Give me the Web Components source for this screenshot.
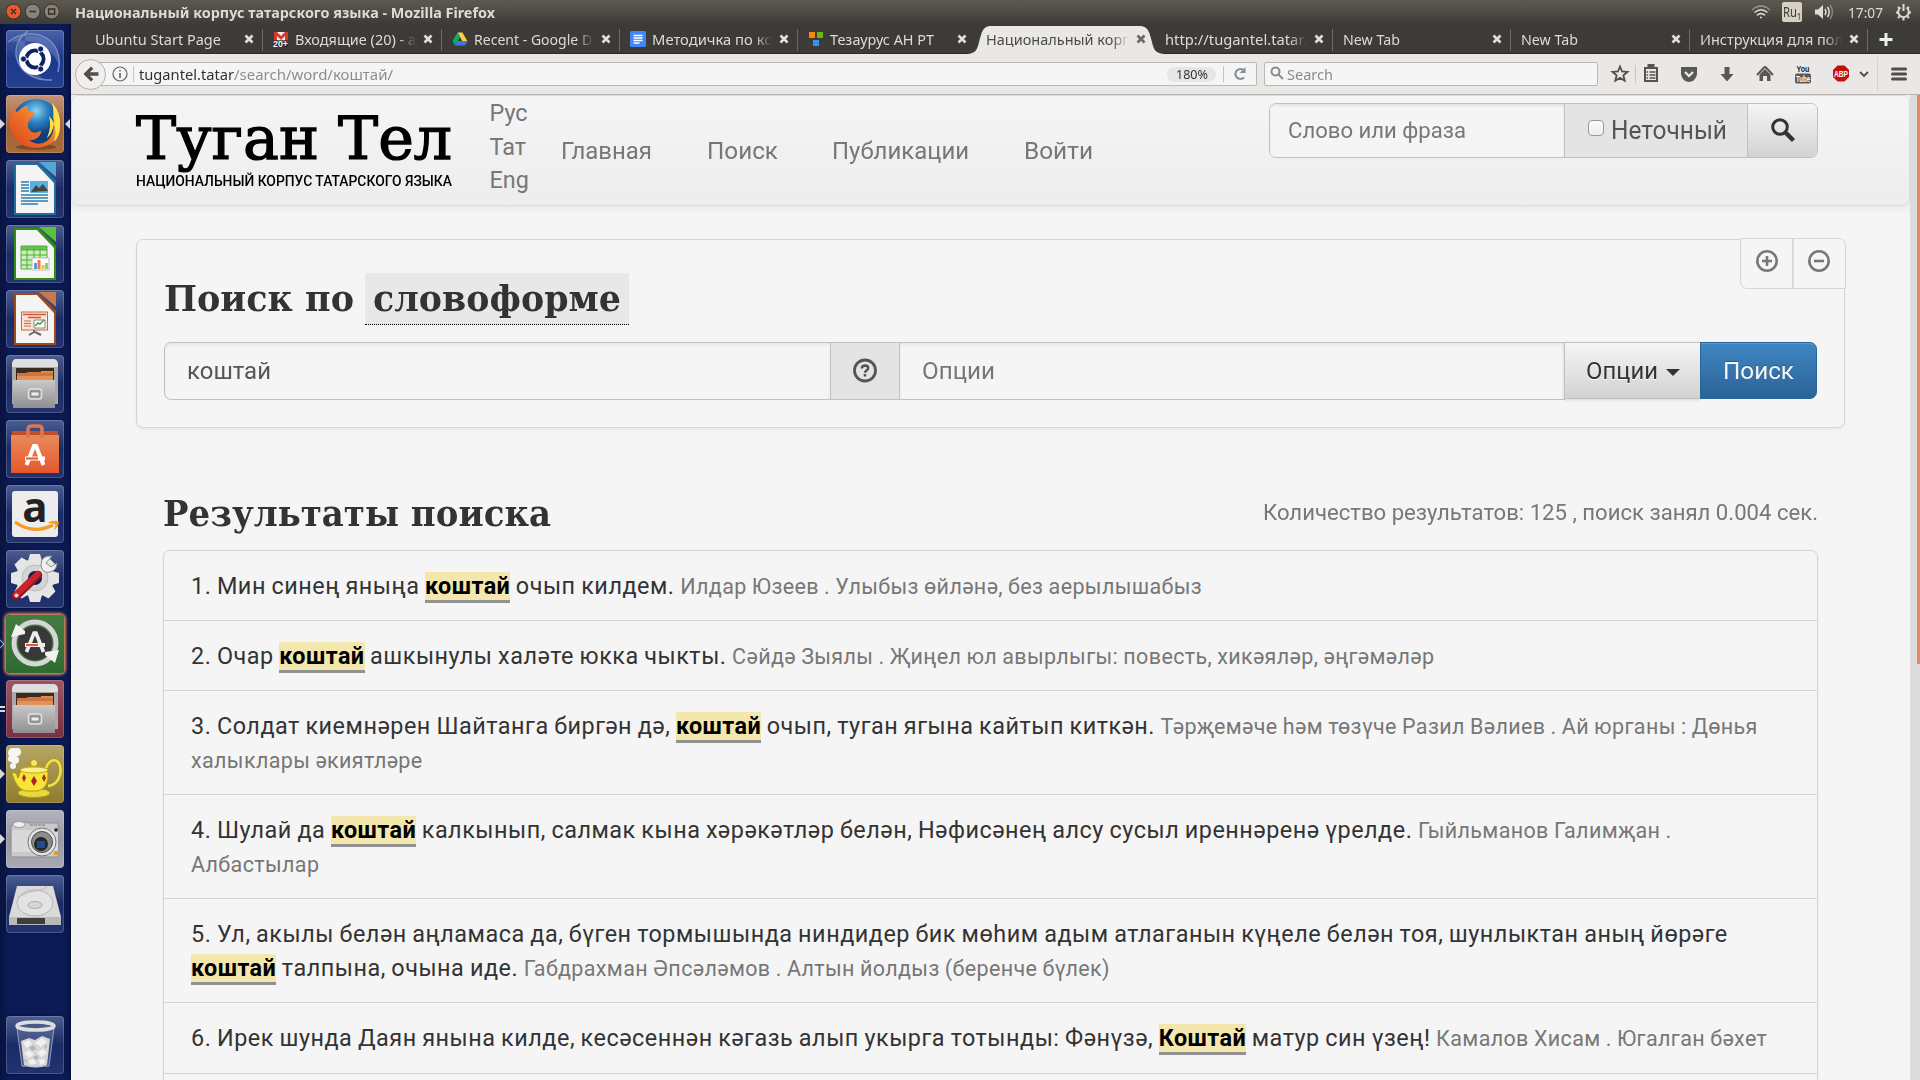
<!DOCTYPE html>
<html lang="ru">
<head>
<meta charset="utf-8">
<title>Национальный корпус татарского языка</title>
<style>
html,body{margin:0;padding:0;width:1920px;height:1080px;overflow:hidden;background:#f5f5f5}
body{font-family:Roboto,"Liberation Sans",sans-serif}
</style>
</head>
<body>
<desktop-shell></desktop-shell>
<script>
const define=(name,html,after)=>customElements.define(name,class extends HTMLElement{
  constructor(){super();this.attachShadow({mode:'open'});}
  connectedCallback(){
    if(this.done)return;this.done=true;
    this.shadowRoot.innerHTML=typeof html==='function'?html(this):html;
    if(after)after(this);
  }
});

/* Text condensed or widened to a given width */
define('fit-text','<style>:host{display:inline-block;white-space:nowrap;overflow:visible}span{display:inline-block;transform-origin:0 50%}</style><span><slot></slot></span>',el=>{
  const w=+el.getAttribute('w'),s=el.shadowRoot.querySelector('span');
  const m=s.getBoundingClientRect().width;
  el.style.width=w+'px';
  if(m)s.style.transform='scaleX('+(w/m)+')';
});

/* ---------- launcher ---------- */
const doc=(c,l,inner)=>`<path d="M8 3h23l19 19v33H8z" fill="${c}"/><path d="M10 5h21l17 18v30H10z" fill="#f4f4f4"/><path d="M33 2h17v15z" fill="${l}"/><path d="M31 3l19 19" stroke="${c}" stroke-width="2.4"/>${inner}`;
const files=`<path d="M6 8q1-4 4-4h37q4 0 5 4v41H6z" fill="#a9a9a9"/><path d="M6 9q1-5 4-5h37q4 0 5 5v3H6z" fill="#dedede"/><path d="M10 13h38v12H10z" fill="#3a2a20"/><path d="M11 18h9l2-1h25v8H11z" fill="#cf7444"/><path d="M11 21h36v5H11z" fill="#e39256"/><path d="M35 16h12v2H35z" fill="#d8923c"/><path d="M7 25h42v28H7z" fill="url(#gr)"/><rect x="22.500" y="34" width="13" height="10" rx="2.500" fill="#9b9b9b" stroke="#e2e2e2" stroke-width="1.500"/><rect x="25" y="37" width="8" height="4" fill="#eee" stroke="#777" stroke-width=".7"/>`;
const icons={
ubuntu:`<path d="M22 1C-2 18 12 52 46 50M2 12C26-6 60 8 52 42" stroke="#93a5d8" stroke-width="1.500" opacity=".7" fill="none"/><path d="M20 3C2 22 12 50 42 50Q14 42 20 3M4 12C28-2 54 8 54 36Q38 4 4 12" fill="#8fa2d4" opacity=".35"/><circle cx="29" cy="29" r="16" fill="#fff"/><circle cx="29" cy="29" r="8.500" fill="none" stroke="#0d2263" stroke-width="4"/><g stroke="#fff" stroke-width="1.500"><path d="M29 29h-14M29 29l7-12M29 29l7 12"/></g><circle cx="29" cy="29" r="6.500" fill="#fff"/><g fill="#0d2263" stroke="#fff" stroke-width=".8"><circle cx="17.500" cy="29" r="3"/><circle cx="34.700" cy="19" r="3"/><circle cx="34.700" cy="39" r="3"/></g>`,
firefox:`<ellipse cx="30" cy="52" rx="20" ry="3" fill="#5a3018" opacity=".5"/><circle cx="30" cy="28" r="24" fill="url(#gb)"/><path d="M46 8q9 9 8 23-2 21-25 22Q7 51 4 31 3 21 8 13q1 3 3 4 5-5 11-7-1 4 1 7 5-1 6 2-4 2-5 6-4 4-1 9 3 5 9 3 5-3 2 3-4 6-11 5 9 7 18 1 9-7 6-24 1-8-1-14z" fill="url(#go)"/><path d="M46 8q9 10 8 23 0 10-6 16 3-12 0-18-2 10-7 14 5-12 2-22 4 4 5 8 1-11-2-21z" fill="#ffe24a"/>`,
writer:doc('#1d6e9b','#4fa8d8',`<g stroke="#2f7dac" stroke-width="1.500"><path d="M15 22h8M15 25h8M15 28h8M15 31h8M15 35h27M15 38h27M15 41h27M15 44h17"/></g><rect x="24" y="21" width="18" height="12" fill="#5bb0e2"/><path d="M25 32l5-7 3 3 4-4 5 7z" fill="#47453a"/>`),
calc:doc('#2f8f12','#5cc23a',`<path d="M15 21h26v23H15z" fill="#c9efbc"/><path d="M15 21h26v4H15z" fill="#6cc24e"/><path d="M15 21h26v23H15zM15 25h26M15 30h26M15 35h26M15 40h26M21 21v23M28 21v23M34 21v23" stroke="#55ab3c" fill="none"/><path d="M26 33h17v12H26z" fill="#fff" stroke="#bbb"/><path d="M28 38h3v6h-3z" fill="#5b9bd5"/><path d="M31.500 35h3v9h-3z" fill="#ef7d4f"/><path d="M35.500 40h3v4h-3z" fill="#f2c32d"/><path d="M39 38h3v6h-3z" fill="#8bd06d"/>`),
impress:doc('#a04a1b','#c77a4e',`<rect x="15.500" y="22" width="26" height="18" fill="#fbe3d5" stroke="#c56b43"/><path d="M17 24.500h23M22 27.500h13" stroke="#d0573a" stroke-width="1.500"/><path d="M18 31h7M18 33.500h7M18 36h7" stroke="#c56b43"/><path d="M28 30h11v8H28z" fill="#fff" stroke="#888"/><path d="M29 36l3-3 2 1 4-4" stroke="#49a33b" stroke-width="1.500" fill="none"/><path d="M28 40v2l-5 3M29 42l6 3" stroke="#666" stroke-width="2" fill="none"/>`),
files,
software:`<path d="M6 11h46v6H6z" fill="#c0502c"/><path d="M5 15h48v38H5z" fill="url(#gor)"/><path d="M22 18v-9q0-3 4-3h6q4 0 4 3v9" fill="none" stroke="#e2744f" stroke-width="3.500"/><path d="M20.500 45l7.500-19h2l7.500 19" fill="none" stroke="#fff" stroke-width="4"/><path d="M19 38.500h20" stroke="#fff" stroke-width="4"/><path d="M20 38.500h12" stroke="#e05a2b" stroke-width="2"/>`,
amazon:`<rect x="6" y="6" width="46" height="46" rx="3" fill="#ededed"/><text x="29" y="37" text-anchor="middle" font-family="Open Sans" font-weight="700" font-size="42" fill="#222">a</text><path d="M9 37q18 13 38 3" fill="none" stroke="#f79a1e" stroke-width="3.200"/><path d="M41 38q8-4 12-1-1 6-5 8 2-4 1-6-3-1-8-1z" fill="#f79a1e"/>`,
settings:`<g fill="#e5e5e5"><circle cx="29" cy="28" r="19"/><path d="M24 4h10l2 7H22zM24 52h10l2-7H22zM5 23v10l7 2V21zM53 23v10l-7 2V21z"/><g transform="rotate(45 29 28)"><path d="M24 4h10l2 7H22zM24 52h10l2-7H22zM5 23v10l7 2V21zM53 23v10l-7 2V21z"/></g></g><circle cx="29" cy="28" r="13" fill="#d4d4d4" stroke="#bbb"/><circle cx="29" cy="28" r="7" fill="#0c215f"/><path d="M31 26l9-9" stroke="#e3e3e3" stroke-width="7"/><path d="M46 6q-11-1-11 9 1 9 9 7 7-2 7-9l-6 4-5-4z" fill="#f0f0f0" stroke="#8a8a8a"/><path d="M10 46L32 25" stroke="#8d1219" stroke-width="8.500" stroke-linecap="round"/><path d="M10 45L32 24" stroke="#c8242c" stroke-width="6" stroke-linecap="round"/><circle cx="10.500" cy="45.500" r="2" fill="#ddd"/>`,
updater:`<circle cx="29" cy="28" r="17" fill="#383838"/><circle cx="29" cy="28" r="21" fill="none" stroke="#d6d6d6" stroke-width="5"/><path d="M5 22L10 9l9 7 0 3z" fill="#f2f2f2"/><path d="M53 35L49 48l-10-8 0-3z" fill="#f2f2f2"/><path d="M20.500 37l7.500-19h2l7.500 19" fill="none" stroke="#eee" stroke-width="3.600"/><path d="M19 30h20" stroke="#eee" stroke-width="4"/><path d="M20 30h12" stroke="#e05a2b" stroke-width="2"/>`,
lamp:`<ellipse cx="28" cy="48" rx="16" ry="4.500" fill="#e9d93f" stroke="#b39b12"/><path d="M40 23q4-10 11-7 5 4 3 14-3 10-12 11" fill="none" stroke="#b39b12" stroke-width="4"/><path d="M40 23q4-10 11-7 5 4 3 14-3 10-12 11" fill="none" stroke="#f1e05a" stroke-width="2.500"/><path d="M6 28q4-2 6 5l2-5q2-6 13-7 13 1 15 7 1 15-10 18H20Q10 44 6 28z" fill="#f6e536" stroke="#b39b12"/><ellipse cx="28" cy="25" rx="14" ry="3" fill="#faf08a" stroke="#c5ad20"/><circle cx="28" cy="18" r="3.500" fill="#f6e96a" stroke="#b39b12"/><path d="M28 31l3 5-3 5-3-5zM18 29l2 4-2 4-2-4zM38 29l2 4-2 4-2-4z" fill="#b3202a"/><g fill="#f7f7f7"><circle cx="7" cy="8" r="5"/><circle cx="11" cy="7" r="4"/><circle cx="5" cy="14" r="3"/><circle cx="9" cy="15" r="4"/><circle cx="7" cy="21" r="3"/></g>`,
camera:`<path d="M5 15h7q1-3 8-3l2 1h30v34H5z" fill="#c9c9c9" stroke="#8f8f8f"/><path d="M6 20h46v22H6z" fill="#d9d9d9"/><ellipse cx="13" cy="14.500" rx="6" ry="3" fill="#eee" stroke="#999"/><path d="M24 15h16" stroke="#777" stroke-dasharray="3 1"/><circle cx="36" cy="32" r="14" fill="#e4e4e4" stroke="#777"/><circle cx="36" cy="32" r="10.500" fill="#8d8d8d" stroke="#4a4a4a"/><circle cx="35" cy="34" r="7" fill="#262626"/><path d="M31 31h8v7h-8z" fill="#1b4c94"/><circle cx="50" cy="20" r="1.800" fill="#222"/><path d="M48 41h4v4h-4z" fill="#e99b30"/>`,
disk:`<path d="M11 11h36l8 31H3z" fill="#dadada"/><path d="M3 42h52v8H3z" fill="#b9b9b9"/><path d="M11 43l28 0v6H11z" fill="#3e3e3e"/><ellipse cx="29" cy="28" rx="18" ry="13" fill="#e3e3e3" stroke="#b4b4b4"/><ellipse cx="29" cy="30" rx="7" ry="3.500" fill="#d6d6d6" stroke="#aaa"/><path d="M12 22q10-6 22-7l7-3" fill="none" stroke="#bbb"/>`,
trash:`<path d="M11 11l5 40h27l5-40z" fill="#8f9dc2" opacity=".3"/><path d="M15 25l8-3 6 2 7-4 8 3-3 26q-11 5-23 0z" fill="#d6d6d6"/><g fill="#f1f1f1"><path d="M17 27l6-3 3 4-5 4zM29 27l7-5 5 4-6 5zM18 37l5-3 5 4-5 4zM31 36l6-3 4 4-6 4zM22 45l5-2 4 4-6 2zM33 44l5-1 1 4-5 2z"/></g><g fill="#b4b4b4"><path d="M23 31l5-2 2 4-4 2zM27 41l4-2 2 3-3 2zM38 30l3-1-1 4zM18 43l3 1-1 3z"/></g><path d="M11 12l5 38h27l5-38" stroke="#b9c2da" fill="none" opacity=".7"/><ellipse cx="29.500" cy="10" rx="18.500" ry="4" fill="#4c5a85" stroke="#dedede" stroke-width="3.500"/>`
};
define('launcher-tile',el=>`<style>:host{display:block;width:58px;height:58px;box-sizing:border-box;border-radius:4px;flex:none;position:relative;
background:var(--tile,linear-gradient(#4c5d90,#1b2b66 50%,#223370));box-shadow:inset 0 0 0 1px rgba(255,255,255,.18),0 0 3px rgba(0,0,0,.45)}
svg{display:block;overflow:visible}i{position:absolute;top:24px;border:5px solid transparent}
.l{left:-6px;border-left-color:#d8d8d8;border-right:0}.r{left:59px;border-right-color:#d8d8d8;border-left:0}
.o{left:-11px;top:25px;width:6px;height:6px;border:1.500px solid #7fb4e8;transform:rotate(45deg)}
.d{left:-6px;top:26px;width:5px;height:2px;border:0;border-top:2px solid #d8d8d8;border-bottom:2px solid #d8d8d8}</style>
<svg width="58" height="58" viewBox="0 0 58 58"><defs><linearGradient id="gr" x2="0" y2="1"><stop stop-color="#c9c9c9"/><stop offset="1" stop-color="#8f8f8f"/></linearGradient><radialGradient id="gb" cy=".25"><stop stop-color="#8fd3f2"/><stop offset=".5" stop-color="#2a7fc0"/><stop offset="1" stop-color="#123e78"/></radialGradient><linearGradient id="go" x1="0" y1="1" x2="1" y2="0"><stop stop-color="#d6431c"/><stop offset=".5" stop-color="#f0742a"/><stop offset="1" stop-color="#ffd23e"/></linearGradient><linearGradient id="gor" x2="0" y2="1"><stop stop-color="#e98a5c"/><stop offset="1" stop-color="#e5572a"/></linearGradient></defs>${icons[el.getAttribute('icon')]}</svg>${(el.getAttribute('mark')||'').split('').map(m=>`<i class="${m}"></i>`).join('')}`);

define('app-launcher',`<style>:host{display:flex;flex-direction:column;justify-content:space-between;width:71px;box-sizing:border-box;padding:6px 0 6px 6px;background:linear-gradient(90deg,#08133f,#0b1a55 12%,#0b1b57 92%,#07123c)}
div{display:flex;flex-direction:column;gap:7px}</style>
<div>
<launcher-tile icon="ubuntu" style="--tile:linear-gradient(#4a62a8,#1b3a8c 50%,#24418f)"></launcher-tile>
<launcher-tile icon="firefox" mark="lr" style="--tile:linear-gradient(#c59478,#a0653c 55%,#a96a3a)"></launcher-tile>
<launcher-tile icon="writer"></launcher-tile>
<launcher-tile icon="calc"></launcher-tile>
<launcher-tile icon="impress"></launcher-tile>
<launcher-tile icon="files"></launcher-tile>
<launcher-tile icon="software"></launcher-tile>
<launcher-tile icon="amazon"></launcher-tile>
<launcher-tile icon="settings"></launcher-tile>
<launcher-tile icon="updater" mark="o" style="--tile:linear-gradient(#437c43,#2f6b2f);box-shadow:0 0 3px 2px #d98a55"></launcher-tile>
<launcher-tile icon="files" mark="d" style="--tile:linear-gradient(#9a5665,#7b2e40)"></launcher-tile>
<launcher-tile icon="lamp" mark="l" style="--tile:linear-gradient(#b5a664,#8e7d2e)"></launcher-tile>
<launcher-tile icon="camera" mark="l" style="--tile:linear-gradient(#b3b3bd,#9a9aa6 50%,#a9a9b4)"></launcher-tile>
<launcher-tile icon="disk"></launcher-tile>
</div>
<launcher-tile icon="trash"></launcher-tile>`);

/* ---------- system panel ---------- */
define('top-panel',`<style>:host{display:flex;align-items:center;height:24px;box-sizing:border-box;padding:0 8px 0 6px;background:linear-gradient(#5c5850,#56534a 25%,#3d3b36);color:#dfdbd2;font:15px/22px "Noto Sans",sans-serif}
b{margin-left:16px;flex:1;padding-bottom:1px}svg{display:block}.s{display:flex;align-items:center}
.ru{width:20px;height:20px;margin-left:11px;margin-bottom:1px;background:#d6d0c6;color:#3d3b36;border-radius:2px;display:flex;justify-content:center;font-size:14px;line-height:20px}
.ru sub{font-size:8px;line-height:29px;vertical-align:baseline}</style>
<svg width="53" height="24"><g stroke="#33312c"><circle cx="7.500" cy="11.500" r="7.500" fill="#e9592d"/><circle cx="26.700" cy="11.500" r="7.500" fill="#86837a"/><circle cx="45.700" cy="11.500" r="7.500" fill="#86837a"/></g><g stroke="#3b2a22" stroke-width="1.300" fill="none"><path d="M5 9l5 5M10 9l-5 5M23.500 11.500h6.500M42.700 9h6v5h-6z"/></g></svg>
<b><fit-text w="420">Национальный корпус татарского языка - Mozilla Firefox</fit-text></b>
<div class="s">
<svg width="20" height="24" fill="none" stroke="#dfdbd2" stroke-width="1.500"><path d="M1 10Q10 2 19 10" opacity=".5"/><path d="M3.500 12.500Q10 7 16.500 12.500M6 15.300Q10 12 14 15.300"/><circle cx="10" cy="17.500" r="1" fill="#dfdbd2" stroke="none"/></svg>
<span class="ru"><fit-text w="14">Ru</fit-text><sub>1</sub></span>
<svg width="22" height="24" style="margin-left:12px" fill="none" stroke="#dfdbd2" stroke-width="1.500"><path d="M1 9.500h3l5-4.500v14l-5-4.500h-3z" fill="#dfdbd2" stroke="none"/><path d="M11 9q2 3 0 6M13.500 7q3.500 5 0 10"/><path d="M16 5q5 7 0 14" opacity=".4"/></svg>
<fit-text w="35" style="margin:0 0 1px 12px">17:07</fit-text>
<svg width="17" height="24" style="margin-left:12px" fill="none" stroke="#dfdbd2" stroke-width="2"><path d="M5.500 7.500a5.300 5.300 0 1 0 6 0M8.500 4v7"/><path d="M1 12.500h2M14 12.500h2M3 7l1.500 1.500M14 7l-1.500 1.500M3 18l1.500-1.500M14 18l-1.500-1.500M8.500 18v2.500"/></svg>
</div>`);

/* ---------- browser tabs ---------- */
const fav={
gmail:`<path d="M1 1h14v10H1z" fill="#eee"/><path d="M1 1h3l4 4 4-4h3v9h-3V5L8 9 4 5v5H1z" fill="#d8382c"/><path d="M1 9h14v7H1z" fill="#222" opacity=".7"/><text x="0" y="15.500" font-family="Liberation Sans" font-size="9" font-weight="bold" fill="#f4f4f4" textLength="15" lengthAdjust="spacingAndGlyphs">20+</text>`,
drive:`<path d="M5.500 1.500h5l5 9h-5z" fill="#ffcf48"/><path d="M5.500 1.500L8 6l-5 8.500L.5 10z" fill="#11a861"/><path d="M5.500 10h10L13 14.500H3z" fill="#3b78e7"/>`,
docs:`<rect width="16" height="16" rx="1.500" fill="#4285f4"/><path d="M3.500 4.500h9M3.500 7h9M3.500 9.500h9M3.500 12h6" stroke="#fff" stroke-width="1.300"/>`,
thes:`<path d="M1 1h6v6H1z" fill="#f78a0b"/><path d="M9 1h6v6H9z" fill="#6cbb0b"/><path d="M5 9h6v6H5z" fill="#3b8eea"/>`};
define('browser-tab',el=>{const a=el.hasAttribute('active'),f=el.getAttribute('fav'),w=el.getAttribute('w');
return `<style>:host{display:flex;align-items:center;position:relative;box-sizing:border-box;width:178.300px;height:30px;flex:none;padding:1px 9px 1px 10px;color:${a?'#4c4b48':'#dfdbd2'};font:15px/28px "Noto Sans",sans-serif}
:host(:not([nosep]))::after{content:"";position:absolute;right:0;top:5px;width:1px;height:22px;background:#6d6b66}
.t{flex:1;min-width:0;overflow:hidden;white-space:nowrap;position:relative;height:28px}
.fade{-webkit-mask-image:linear-gradient(90deg,#000 calc(100% - 17px),transparent)}
svg{flex:none;display:block;overflow:visible}.f{margin-right:6px}.x{margin-left:7px}
.bg{position:absolute;left:-11px;top:1px}.t,.x,.f{z-index:1}</style>
${a?`<svg class="bg" width="202" height="29"><path d="M0 29C14 29 12 22 16 10C18 3 21 1 26 1H174C180 1 183 3 185 10C189 22 187 29 202 29z" fill="#eae8e6"/></svg>`:''}
${f?`<svg class="f" width="16" height="16">${fav[f]}</svg>`:''}<div class="t ${el.hasAttribute('fade')?'fade':''}"><fit-text w="${w}"><slot></slot></fit-text></div>
<svg class="x" width="10" height="10" stroke="${a?'#6a6862':'#e3dfd7'}" stroke-width="2.600"><path d="M1.500 1.500l7 7M8.500 1.500l-7 7"/></svg>`});
define('tab-strip',`<style>:host{display:flex;height:30px;background:#3c3b37;padding-left:14px;box-shadow:inset 0 -1px #2c2b28}svg{margin:6px 0 0 8.500px}</style>
<browser-tab w="126">Ubuntu Start Page</browser-tab>
<browser-tab fav="gmail" w="121" fade>Входящие (20) - а</browser-tab>
<browser-tab fav="drive" w="124" fade>Recent - Google Dr</browser-tab>
<browser-tab fav="docs" w="121" fade>Методичка по ко</browser-tab>
<browser-tab fav="thes" w="104" nosep>Тезаурус АН РТ</browser-tab>
<browser-tab active w="145" fade nosep>Национальный корп</browser-tab>
<browser-tab w="145" fade>http://tugantel.tatar/</browser-tab>
<browser-tab w="57">New Tab</browser-tab>
<browser-tab w="57">New Tab</browser-tab>
<browser-tab w="143" fade>Инструкция для пол</browser-tab>
<svg width="20" height="20" stroke="#eee" stroke-width="3"><path d="M10 3v13M3.500 9.500h13"/></svg>`);

/* ---------- navigation toolbar ---------- */
define('nav-toolbar',`<style>:host{display:flex;align-items:center;box-sizing:border-box;height:41px;background:#eae8e6;border-bottom:1px solid #b9b6b2;padding-left:4px;font:15px/22px "Noto Sans",sans-serif;color:#33322f}
.back{width:31px;height:31px;border:1px solid #b3b0ab;border-radius:50%;background:#f0efed;box-sizing:border-box;flex:none;z-index:1}
.url,.q{display:flex;align-items:center;box-sizing:border-box;height:24px;border:1px solid #bbb8b4;border-radius:2px;background:#f5f5f5}
.url{width:1167px;margin-left:-16px;padding-left:21px}.q{width:334px;margin-left:7px;padding-left:4px;color:#8c8b88}
svg{display:block;flex:none;overflow:visible}.path{color:#8e8d8a}.sep{width:1px;background:#c9c6c2}
.pill{width:49px;height:15px;border-radius:8px;background:#e6e6e6;display:flex;align-items:center;justify-content:center;font-size:13px;line-height:15px}
.ic{display:grid;grid-template-columns:repeat(6,38px);}.ic svg{width:22px;margin:auto}</style>
<svg class="back" viewBox="0 0 31 31"><path d="M8 15l8-8 2.500 2.500-3.800 3.700H24v3.600h-9.300l3.800 3.700L16 23z" fill="#4f4e4b"/></svg>
<div class="url"><svg width="16" height="16" fill="none" stroke="#63625f" stroke-width="1.200"><circle cx="8" cy="8" r="7"/><path d="M8 7v5M8 4v1.500" stroke-width="1.600"/></svg>
<i class="sep" style="height:16px;margin:0 5px 0 5px"></i><fit-text w="95">tugantel.tatar</fit-text><fit-text class="path" w="159">/search/word/коштай/</fit-text><span style="flex:1"></span>
<span class="pill"><fit-text w="32">180%</fit-text></span><i class="sep" style="height:16px;margin:0 8px 0 7px"></i>
<svg width="16" height="16" style="margin-right:8px" fill="none" stroke="#8291a0" stroke-width="2.200"><path d="M12 11.500A5 5 0 1 1 12 4.500"/><path d="M13.500 1v6h-6z" fill="#8291a0" stroke="none"/></svg></div>
<div class="q"><svg width="18" height="18" fill="none" stroke="#8c8b88" stroke-width="2"><circle cx="6.500" cy="6.500" r="4"/><path d="M9.500 9.500l4.500 4.500"/></svg><fit-text w="46">Search</fit-text></div>
<svg width="20" height="20" style="margin:0 5px 0 12px" fill="none" stroke="#4f4e4b" stroke-width="1.800"><path d="M10 2.500l2.100 5 5.400.4-4.100 3.500 1.300 5.300L10 13.900l-4.700 2.800 1.300-5.300-4.100-3.500 5.400-.4z"/></svg><i class="sep" style="height:18px"></i>
<div class="ic" style="margin-left:-4px">
<svg height="20" viewBox="-1 0 22 20" fill="none" stroke="#55534f" stroke-width="2"><path d="M4 4h12v13H4z"/><path d="M7.500 3.500h5V1h-5z" fill="#55534f"/><path d="M5.500 8h1.500M8.500 8h6M5.500 11h1.500M8.500 11h6M5.500 14h1.500M8.500 14h6" stroke-width="1.600"/></svg>
<svg height="20" viewBox="0 0 22 20"><path d="M3 3h16v7q-1 7-8 8-7-1-8-8z" fill="#5a5855"/><path d="M7 8l4 4 4-4" fill="none" stroke="#eee" stroke-width="2.200"/></svg>
<svg height="20" viewBox="0 0 22 20"><path d="M8.500 3h5v7h4l-6.500 7.500L4.500 10h4z" fill="#5a5855"/></svg>
<svg height="20" viewBox="0 0 22 20"><path d="M11 2.500L19 11M11 2.500L3 11" stroke="#5a5855" stroke-width="2" fill="none"/><path d="M5.500 10.500L11 5l5.500 5.500V17H13v-5H9v5H5.500z" fill="#5a5855"/></svg>
<svg height="20" viewBox="0 0 22 20"><text x="11" y="8.300" text-anchor="middle" font-family="Liberation Sans" font-size="9" font-weight="bold" fill="#222" textLength="13" lengthAdjust="spacingAndGlyphs">You</text><rect x="3" y="9.500" width="16" height="10" rx="2" fill="#5a5855"/><text x="11" y="17.500" text-anchor="middle" font-family="Liberation Sans" font-size="8.500" font-weight="bold" fill="#fff" textLength="14" lengthAdjust="spacingAndGlyphs">Tube</text></svg>
<svg height="20" viewBox="0 0 22 20"><path d="M7.500 1.500h7l4.500 4.500v7l-4.500 4.500h-7L3 13V6z" fill="#c70d0d"/><text x="11" y="12.800" text-anchor="middle" font-family="Liberation Sans" font-size="9" font-weight="bold" fill="#fff" textLength="14" lengthAdjust="spacingAndGlyphs">ABP</text></svg>
</div>
<svg width="12" height="12" style="margin-left:-2px" fill="none" stroke="#4f4e4b" stroke-width="1.800"><path d="M2 4l4 4 4-4"/></svg>
<i class="sep" style="height:34px;margin-left:7px;background:#d8d5d1"></i>
<svg width="18" height="16" style="margin-left:12px" stroke="#4f4e4b" stroke-width="3" stroke-linecap="round"><path d="M2.500 3h13M2.500 8h13M2.500 13h13"/></svg>`);

/* ---------- site ---------- */
define('site-header',`<style>:host{display:flex;box-sizing:border-box;height:111px;width:1839px;padding:0 91px 0 64px;border:1px solid #dcdcdc;border-radius:7px;background:linear-gradient(#f5f5f5,#ededed);box-shadow:0 2px 8px rgba(0,0,0,.07);color:#777;font:23.400px/33.400px Roboto,sans-serif}
.logo{width:316px;display:flex;flex-direction:column;color:#000}
.a{font:60px/72px "DejaVu Serif Condensed","DejaVu Serif",serif;font-stretch:condensed;height:72px;margin-top:6px;-webkit-text-stroke:1.200px #000}
.b{font:500 15px/18px Roboto,sans-serif;height:18px;margin-top:-2px}
.lang{display:flex;flex-direction:column;margin:1px 0 0 37.500px;width:44px;flex:none;line-height:33.600px}
nav{display:flex;gap:54.500px;margin:39px auto 0 27.500px}
.s{display:flex;height:55px;margin-top:7px;border:1px solid #c1c1c1;border-radius:7px;box-sizing:border-box;font-size:21.500px;line-height:53px;overflow:hidden}
.in{width:276.500px;padding-left:18px;background:#f5f5f5;box-shadow:inset 0 2px 3px rgba(0,0,0,.08)}
.ad{width:184px;box-sizing:border-box;border:solid #c1c1c1;border-width:0 1px;background:#e4e4e4;color:#555;display:flex;padding-left:22.500px;font-size:25px}
.cb{width:16px;height:16px;box-sizing:border-box;border:1px solid #999;border-radius:4px;background:linear-gradient(#fafafa,#eee);margin:16px 7px 0 0}
.bt{width:69px;background:linear-gradient(#f5f5f5,#d2d2d2);display:flex;align-items:center;justify-content:center}</style>
<div class="logo"><div class="a"><fit-text w="316">Туган Тел</fit-text></div><div class="b"><fit-text w="316">НАЦИОНАЛЬНЫЙ КОРПУС ТАТАРСКОГО ЯЗЫКА</fit-text></div></div>
<div class="lang"><span>Рус</span><span>Тат</span><span>Eng</span></div>
<nav><fit-text w="91">Главная</fit-text><fit-text w="71">Поиск</fit-text><fit-text w="137">Публикации</fit-text><fit-text w="69">Войти</fit-text></nav>
<div class="s"><div class="in"><fit-text w="178">Слово или фраза</fit-text></div><div class="ad"><span class="cb"></span><fit-text w="116">Неточный</fit-text></div>
<div class="bt"><svg width="26" height="26" fill="none" stroke="#333"><circle cx="10" cy="9" r="7.300" stroke-width="3"/><path d="M15.500 14.500l8 8" stroke-width="4.500"/></svg></div></div>`);

define('query-card',`<style>:host{display:block;position:relative;box-sizing:border-box;width:1709px;height:189px;margin:33px 0 0 65px;border:1px solid #d4d4d4;border-radius:7px;box-shadow:0 2px 3px rgba(0,0,0,.05);padding:33px 27px 0;color:#333}
h2{margin:0;height:52px;display:flex;font:bold 35.500px/52px "DejaVu Serif Condensed","DejaVu Serif",serif;font-stretch:condensed}
.w{margin-left:11px;padding:0 8px;background:#e8e8e6;border-bottom:1px dotted #000;height:51px}
.row{display:flex;margin-top:17px;height:58px;font:23.400px/56px Roboto,sans-serif}
.row>*{box-sizing:border-box;border:1px solid #c1c1c1}
.in{width:667px;padding-left:22px;box-shadow:inset 0 2px 3px rgba(0,0,0,.06);color:#555}
.f{border-radius:7px 0 0 7px}.ph{color:#777;width:667px;padding-left:22px}
.ad{width:70px;margin:0 -1px;background:#e4e4e4;display:flex;align-items:center;justify-content:center}
.op{width:137px;margin-left:-1px;height:57px;padding-left:21px;background:linear-gradient(#f5f5f5,#d2d2d2);box-shadow:0 1px 3px rgba(0,0,0,.12);display:flex;text-shadow:0 1px #fff}
.op i{margin:26px 0 0 8px;border:7px solid transparent;border-top-color:#333;border-bottom:0;height:0}
.go{width:117px;height:57px;margin-left:-1px;padding-left:22px;border-color:#2a6598;background:linear-gradient(#4086c3,#2a6397);box-shadow:inset 0 1px rgba(255,255,255,.15);border-radius:0 7px 7px 0;color:#f5f5f5;text-shadow:0 -1px rgba(0,0,0,.25)}
.pm{position:absolute;right:-2px;top:-2px;width:106px;height:51px;box-sizing:border-box;display:flex;border:1px solid #d5d5dc;border-radius:0 7px 0 7px;background:#f5f5f5}
.pm span{flex:1;display:flex;justify-content:center;padding-top:10px}.pm span+span{border-left:2px solid #d9d9df;padding-right:1px}svg{display:block}</style>
<h2><fit-text w="190">Поиск по</fit-text><span class="w"><fit-text w="248">словоформе</fit-text></span></h2>
<div class="row"><div class="in f"><fit-text w="84">коштай</fit-text></div>
<div class="ad"><svg width="26" height="26" fill="none" stroke="#555"><circle cx="13" cy="12.500" r="10.500" stroke-width="2.800"/><path d="M9.800 10.500q.2-3 3.400-3 3 .2 3 2.600 0 1.500-1.800 2.500-1.400.8-1.400 2.200" stroke-width="2.500"/><path d="M13 16v2.500" stroke-width="2.600"/></svg></div>
<div class="in ph"><fit-text w="73">Опции</fit-text></div><div class="op"><fit-text w="72">Опции</fit-text><i></i></div><div class="go"><fit-text w="71">Поиск</fit-text></div></div>
<div class="pm"><span style="padding-left:1px"><svg width="24" height="24" fill="none" stroke="#777" stroke-width="2.600"><circle cx="12" cy="12" r="9.700"/><path d="M12 7v10M7 12h10"/></svg></span><span><svg width="24" height="24" fill="none" stroke="#777" stroke-width="2.600"><circle cx="12" cy="12" r="9.700"/><path d="M7 12h10"/></svg></span></div>`);

define('hit-word','<style>:host{display:inline;background:#f3e7ae;border-bottom:3px solid #929292;color:#000;font-weight:bold;line-height:0;letter-spacing:.42px}</style><slot></slot>');
define('source-note','<style>:host{display:inline;color:#777;font-size:21.500px;line-height:0;letter-spacing:.36px;word-spacing:-.5px}</style><slot></slot>');
define('result-row','<style>:host{display:block;box-sizing:border-box;padding:18px 27px 17.100px;border-bottom:1px solid #d4d4d4;line-height:34px;white-space:nowrap;letter-spacing:.52px;word-spacing:-.75px}</style><slot></slot>');
define('result-list',`<style>:host{display:block;padding:0 92px 0 92px;color:#333;font:23.400px/33.400px Roboto,sans-serif}
.h{display:flex;justify-content:space-between;align-items:flex-start;margin-top:59px;height:63px}
h2{margin:0 0 0 -.5px;font:bold 35.500px/54px "DejaVu Serif Condensed","DejaVu Serif",serif;font-stretch:condensed}
p{margin:9px 0 0 0;color:#777;font-size:21.500px}
.l{border:1px solid #d4d4d4;border-radius:7px 7px 0 0;box-shadow:0 1px 3px rgba(0,0,0,.05);height:560px}</style>
<div class="h"><h2><fit-text w="388">Результаты поиска</fit-text></h2><p><fit-text w="555">Количество результатов: 125 , поиск занял 0.004 сек.</fit-text></p></div>
<div class="l">
<result-row>1. Мин синең яныңа <hit-word>коштай</hit-word> очып килдем. <source-note>Илдар Юзеев . Улыбыз өйләнә, без аерылышабыз</source-note></result-row>
<result-row>2. Очар <hit-word>коштай</hit-word> ашкынулы халәте юкка чыкты. <source-note>Сәйдә Зыялы . Җиңел юл авырлыгы: повесть, хикәяләр, әңгәмәләр</source-note></result-row>
<result-row>3. Солдат киемнәрен Шайтанга биргән дә, <hit-word>коштай</hit-word> очып, туган ягына кайтып киткән. <source-note>Тәрҗемәче һәм төзүче Разил Вәлиев . Ай юрганы : Дөнья<br>халыклары әкиятләре</source-note></result-row>
<result-row>4. Шулай да <hit-word>коштай</hit-word> калкынып, салмак кына хәрәкәтләр белән, Нәфисәнең алсу сусыл иреннәренә үрелде. <source-note>Гыйльманов Галимҗан .<br>Албастылар</source-note></result-row>
<result-row>5. Ул, акылы белән аңламаса да, бүген тормышында ниндидер бик мөһим адым атлаганын күңеле белән тоя, шунлыктан аның йөрәге<br><hit-word>коштай</hit-word> талпына, очына иде. <source-note>Габдрахман Әпсәләмов . Алтын йолдыз (беренче бүлек)</source-note></result-row>
<result-row>6. Ирек шунда Даян янына килде, кесәсеннән кәгазь алып укырга тотынды: Фәнүзә, <hit-word>Коштай</hit-word> матур син үзең! <source-note>Камалов Хисам . Югалган бәхет</source-note></result-row>
</div>`);

define('web-page',`<style>:host{display:flex;flex:1;min-height:0;overflow:hidden;background:#f5f5f5}
main{width:1839px;overflow:hidden}query-card+result-list{width:1655px}aside{width:10px;background:#dcdcdc;display:flex;justify-content:flex-end}aside i{width:3px;height:569px;background:#e5885f}</style>
<main><site-header></site-header><query-card></query-card><result-list></result-list></main><aside><i></i></aside>`);

define('desktop-shell',`<style>:host{display:grid;grid-template-rows:24px 1056px;width:1920px;height:1080px;overflow:hidden}
.b{display:flex;min-height:0}.w{flex:1;min-width:0;display:flex;flex-direction:column}</style>
<top-panel></top-panel><div class="b"><app-launcher></app-launcher><div class="w"><tab-strip></tab-strip><nav-toolbar></nav-toolbar><web-page></web-page></div></div>`);
</script>
</body>
</html>
